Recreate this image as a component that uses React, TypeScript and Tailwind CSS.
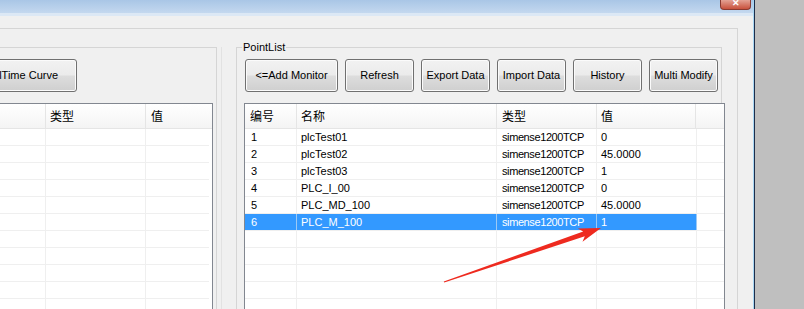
import React from 'react';

const points = [
  ['1', 'plcTest01', 'simense1200TCP', '0'],
  ['2', 'plcTest02', 'simense1200TCP', '45.0000'],
  ['3', 'plcTest03', 'simense1200TCP', '1'],
  ['4', 'PLC_I_00', 'simense1200TCP', '0'],
  ['5', 'PLC_MD_100', 'simense1200TCP', '45.0000'],
  ['6', 'PLC_M_100', 'simense1200TCP', '1'],
];

const btn =
  'h-[33px] shrink-0 rounded-[3px] border border-[#707070] bg-[linear-gradient(to_bottom,#f2f2f2_0%,#ebebeb_48%,#dddddd_52%,#cfcfcf_100%)] shadow-[inset_0_0_0_1px_#fbfbfb] flex items-center justify-center text-black';

const cjk = "font-['Noto_Sans_CJK_SC','Liberation_Sans',sans-serif] text-[12px]";

function WinButton({ label, w }: { label: string; w: string }) {
  return <div className={`${btn} ${w}`}>{label}</div>;
}

export default function App() {
  const empty = Array.from({ length: 11 });

  return (
    <div className="relative w-[804px] h-[309px] overflow-hidden flex bg-[#bfbfbf] font-['Liberation_Sans',Arial,sans-serif] text-[11px] text-black">
      {/* window */}
      <div className="w-[753px] h-full shrink-0 flex flex-col bg-[#f0f0f0]">
        {/* title bar */}
        <div className="h-[13px] flex justify-end pr-[2px] bg-[linear-gradient(to_bottom,#a9c6e6,#c4d8ef)]">
          <div className="w-[31px] h-[10px] rounded-b-[4px] border border-t-0 border-[#8a3a30] bg-[linear-gradient(to_bottom,#e4a294,#c8513c)] flex items-start justify-center overflow-hidden">
            <span className="text-white text-[9px] leading-[7px] font-bold">✕</span>
          </div>
        </div>
        <div className="h-[3px] bg-[#dce8f5]" />
        <div className="h-[12px]" />

        {/* outer frame */}
        <div className="flex-1 w-[738px] border-t border-r border-[#d5d5d5] flex pt-[18px] min-h-0">
          {/* left group */}
          <div className="w-[217px] shrink-0 border-t border-r border-[#d5d5d5] flex flex-col">
            <div className="pt-[11px]">
              <div className={`${btn} w-[117px] -ml-[40px]`}>RealTime Curve</div>
            </div>
            <div className="mt-[11px] -ml-[50px] w-[263px] flex-1 border border-[#828790] bg-white">
              <div className={`flex h-[25px] border-b border-[#e5e5e5] bg-[linear-gradient(to_bottom,#ffffff,#f4f4f4)] ${cjk}`}>
                <div className="w-[95px] border-r border-[#e5e5e5]" />
                <div className="w-[100px] border-r border-[#e5e5e5] flex items-center pl-[4px]">类型</div>
                <div className="flex-1 flex items-center pl-[5px]">值</div>
              </div>
              {empty.map((_, i) => (
                <div key={i} className="flex h-[17px] border-b border-[#efefef] mr-[3px]">
                  <div className="w-[95px] border-r border-[#efefef]" />
                  <div className="w-[100px] border-r border-[#efefef]" />
                  <div className="flex-1" />
                </div>
              ))}
            </div>
          </div>
          <div className="w-[5px] shrink-0 border-r border-[#e2e2e2]" />

          {/* right group */}
          <div className="relative ml-[14px] w-[486px] shrink-0 border-t border-l border-r border-[#d5d5d5] flex flex-col">
            <span className="absolute -top-[8px] left-[5px] px-[1px] bg-[#f0f0f0] leading-[14px]">PointList</span>
            <div className="pt-[11px] pl-[8px] flex gap-[7px]">
              <WinButton label="<=Add Monitor" w="w-[93px]" />
              <WinButton label="Refresh" w="w-[69px]" />
              <WinButton label="Export Data" w="w-[69px]" />
              <WinButton label="Import Data" w="w-[69px]" />
              <WinButton label="History" w="w-[69px]" />
              <WinButton label="Multi Modify" w="w-[69px]" />
            </div>
            <div className="mt-[11px] ml-[7px] w-[481px] flex-1 border border-[#828790] bg-white">
              <div className={`flex h-[25px] border-b border-[#e5e5e5] bg-[linear-gradient(to_bottom,#ffffff,#f4f4f4)] ${cjk}`}>
                <div className="w-[52px] border-r border-[#e5e5e5] flex items-center pl-[5px]">编号</div>
                <div className="w-[200px] border-r border-[#e5e5e5] flex items-center pl-[4px]">名称</div>
                <div className="w-[100px] border-r border-[#e5e5e5] flex items-center pl-[5px]">类型</div>
                <div className="w-[99px] border-r border-[#e5e5e5] flex items-center pl-[4px]">值</div>
                <div className="flex-1" />
              </div>
              {empty.map((_, i) => {
                const r = points[i];
                const sel = i === 5;
                const cell = sel
                  ? 'bg-[#3399ff] text-white border-r border-[#9cc9f5]'
                  : 'border-r border-[#efefef]';
                return (
                  <div key={i} className="flex h-[17px] border-b border-[#efefef] leading-[17px]">
                    <div className={`w-[52px] pl-[6px] ${cell}`}>{r?.[0]}</div>
                    <div className={`w-[200px] pl-[4px] ${cell}`}>{r?.[1]}</div>
                    <div className={`w-[100px] pl-[5px] tracking-[-0.4px] ${cell}`}>{r?.[2]}</div>
                    <div className={`w-[100px] pl-[4px] ${cell}`}>{r?.[3]}</div>
                    <div className="flex-1" />
                  </div>
                );
              })}
            </div>
          </div>
        </div>
      </div>
      <div className="w-px h-full bg-[#a8d6f3]" />
      <div className="w-px h-full bg-[#1c2d4a]" />
      <div className="flex-1 h-full bg-[#bfbfbf]" />

      {/* annotation arrow */}
      <svg className="absolute left-0 top-0 pointer-events-none" width="804" height="309" viewBox="0 0 804 309">
        <polygon
          points="443.8,281.5 583.2,231.5 577.9,228.6 601,228 582.5,241.8 584.8,236.3 444.2,282.5"
          fill="#ee2a1f"
        />
      </svg>
    </div>
  );
}
